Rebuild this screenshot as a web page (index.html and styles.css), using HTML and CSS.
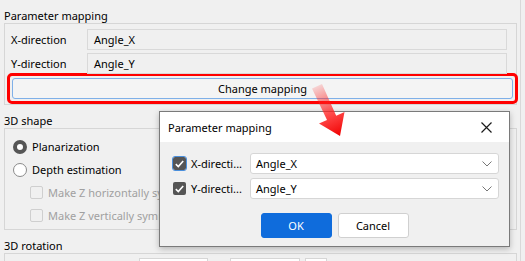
FILE: index.html
```html
<!DOCTYPE html>
<html>
<head>
    <link rel="stylesheet" href="styles.css">
</head>
<body>
    <div class="page">
        <div class="group-title">Parameter mapping</div>
        <div class="group group-mapping">
            <div class="field-row">
                <label class="field-label">X-direction</label>
                <div class="field-value">Angle_X</div>
            </div>
            <div class="field-row">
                <label class="field-label">Y-direction</label>
                <div class="field-value">Angle_Y</div>
            </div>
            <div class="highlight">
                <button class="change-btn">Change mapping</button>
            </div>
        </div>

        <div class="group-title">3D shape</div>
        <div class="group group-shape">
            <div class="option-row">
                <span class="radio checked"></span>
                <span>Planarization</span>
            </div>
            <div class="option-row">
                <span class="radio"></span>
                <span>Depth estimation</span>
            </div>
            <div class="option-row sub disabled">
                <span class="check"></span>
                <span>Make Z horizontally symmetric</span>
            </div>
            <div class="option-row sub disabled">
                <span class="check"></span>
                <span>Make Z vertically symmetric</span>
            </div>
        </div>

        <div class="group-title">3D rotation</div>
        <div class="group group-rotation">
            <div class="rot-box rot-a"></div>
            <div class="rot-box rot-b"></div>
            <div class="rot-box rot-c"></div>
        </div>
    </div>

    <!-- dialog popped over the panel -->
    <div class="dialog">
        <div class="dialog-title">
            <span>Parameter mapping</span>
            <svg class="close" width="11" height="11" viewBox="0 0 11 11">
                <path d="M0.5 0.5 L10.5 10.5 M10.5 0.5 L0.5 10.5" stroke="#1a1a1a" stroke-width="1.2"/>
            </svg>
        </div>
        <div class="dialog-body">
            <div class="map-row">
                <span class="cb checked focused">
                    <svg width="9" height="8" viewBox="0 0 9 8"><path d="M0.8 4.2 L3.3 6.6 L8.2 1" fill="none" stroke="#fff" stroke-width="1.6"/></svg>
                </span>
                <span class="map-label">X-directi...</span>
                <div class="combo">
                    <span>Angle_X</span>
                    <svg width="10" height="6" viewBox="0 0 10 6"><path d="M0.5 0.5 L5 5 L9.5 0.5" fill="none" stroke="#777" stroke-width="1"/></svg>
                </div>
            </div>
            <div class="map-row">
                <span class="cb checked">
                    <svg width="9" height="8" viewBox="0 0 9 8"><path d="M0.8 4.2 L3.3 6.6 L8.2 1" fill="none" stroke="#fff" stroke-width="1.6"/></svg>
                </span>
                <span class="map-label">Y-directi...</span>
                <div class="combo">
                    <span>Angle_Y</span>
                    <svg width="10" height="6" viewBox="0 0 10 6"><path d="M0.5 0.5 L5 5 L9.5 0.5" fill="none" stroke="#777" stroke-width="1"/></svg>
                </div>
            </div>
            <div class="dialog-buttons">
                <button class="btn btn-primary">OK</button>
                <button class="btn">Cancel</button>
            </div>
        </div>
    </div>

    <!-- annotation arrow -->
    <svg class="arrow" width="525" height="261" viewBox="0 0 525 261">
        <defs>
            <linearGradient id="arrowFill" x1="317" y1="86" x2="340" y2="136" gradientUnits="userSpaceOnUse">
                <stop offset="0" stop-color="#ff2020" stop-opacity="0.15"/>
                <stop offset="0.55" stop-color="#ff2020" stop-opacity="0.8"/>
                <stop offset="1" stop-color="#f00000" stop-opacity="1"/>
            </linearGradient>
        </defs>
        <polygon points="312,88.5 322,84 336.2,115.7 344.5,112 340,136 319,123.6 327,120" fill="url(#arrowFill)"/>
    </svg>
</body>
</html>
```

FILE: styles.css
```css
body {
    margin: 0;
    background-color: #f0f0f0;
    font-family: "Noto Sans", "Open Sans", sans-serif;
    font-size: 11px;
    color: #000;
    width: 525px;
    height: 261px;
    overflow: hidden;
    position: relative;
}
.page {
    width: 521px;
    height: 261px;
    border-right: 1px solid #d9d9d9;
    padding: 8px 0 0 4px;
    box-sizing: border-box;
    overflow: hidden;
}
.group-title {
    height: 15px;
    line-height: 15px;
    padding-left: 0;
}
.group {
    width: 513px;
    border: 1px solid #d6d6d6;
    box-sizing: border-box;
    margin-bottom: 8px;
}
.group-mapping {
    padding: 5px 0 0 2px;
}
.field-row {
    display: flex;
    align-items: center;
    height: 21px;
    margin-bottom: 3px;
}
.field-label {
    width: 80px;
    padding-left: 4px;
    box-sizing: border-box;
}
.field-value {
    width: 420px;
    height: 21px;
    line-height: 19px;
    border: 1px solid #d9d9d9;
    box-sizing: border-box;
    padding-left: 6px;
}
.highlight {
    margin-top: -4px;
    margin-right: -2px;
    border: 3px solid #ff0000;
    border-radius: 5px;
    padding: 2px;
}
.change-btn {
    display: block;
    width: 100%;
    height: 21px;
    font: inherit;
    background-color: #f4f4f4;
    border: 1px solid #7fb0e8;
    border-radius: 3px;
    padding: 0;
}
.group-shape {
    padding: 6px 0 2px 8px;
}
.option-row {
    display: flex;
    align-items: center;
    height: 23px;
}
.option-row.sub {
    padding-left: 17px;
}
.option-row.disabled {
    color: #a0a0a0;
}
.radio {
    width: 14px;
    height: 14px;
    border-radius: 50%;
    border: 1px solid #8a8a8a;
    background-color: #fff;
    box-sizing: border-box;
    margin-right: 5px;
}
.radio.checked {
    border: 4px solid #565656;
    background-color: #fff;
}
.check {
    width: 13px;
    height: 13px;
    border: 1px solid #cfcfcf;
    border-radius: 2px;
    box-sizing: border-box;
    margin-right: 5px;
}
.group-rotation {
    height: 20px;
    padding: 4px 0 0 134px;
    display: flex;
    border-bottom: none;
}
.rot-box {
    height: 20px;
    background-color: #fff;
    border: 1px solid #d6d6d6;
    box-sizing: border-box;
}
.rot-a { width: 69px; }
.rot-b { width: 70px; margin-left: 22px; }
.rot-c { width: 22px; margin-left: 5px; }

/* dialog */
.dialog {
    position: absolute;
    left: 159px;
    top: 111px;
    width: 351px;
    height: 136px;
    background-color: #f0f0f0;
    border: 1px solid #7a7a7a;
    box-sizing: border-box;
    box-shadow: 0 2px 6px rgba(0,0,0,0.25);
}
.dialog-title {
    height: 30px;
    background-color: #fff;
    display: flex;
    align-items: center;
    justify-content: space-between;
    padding: 0 17px 0 8px;
}
.dialog-body {
    padding: 11px 10px 0 13px;
}
.map-row {
    display: flex;
    align-items: center;
    height: 21px;
    margin-bottom: 4px;
}
.cb {
    width: 13px;
    height: 13px;
    border-radius: 2px;
    background-color: #555;
    display: flex;
    align-items: center;
    justify-content: center;
    box-sizing: border-box;
    margin-right: 5px;
}
.cb.focused {
    outline: 1px solid #4a8fdc;
}
.map-label {
    width: 59px;
}
.combo {
    flex: 1;
    height: 21px;
    background-color: #fff;
    border: 1px solid #d6d6d6;
    border-radius: 3px;
    box-sizing: border-box;
    display: flex;
    align-items: center;
    justify-content: space-between;
    padding: 0 6px 0 5px;
}
.dialog-buttons {
    display: flex;
    justify-content: center;
    gap: 6px;
    margin-top: 14px;
    padding-right: 3px;
}
.btn {
    width: 71px;
    height: 25px;
    font: inherit;
    background-color: #fff;
    border: 1px solid #d0d0d0;
    border-radius: 3px;
    padding: 0;
}
.btn-primary {
    background-color: #0f6cdc;
    border-color: #0f6cdc;
    color: #fff;
}
.arrow {
    position: absolute;
    left: 0;
    top: 0;
    pointer-events: none;
}
```
